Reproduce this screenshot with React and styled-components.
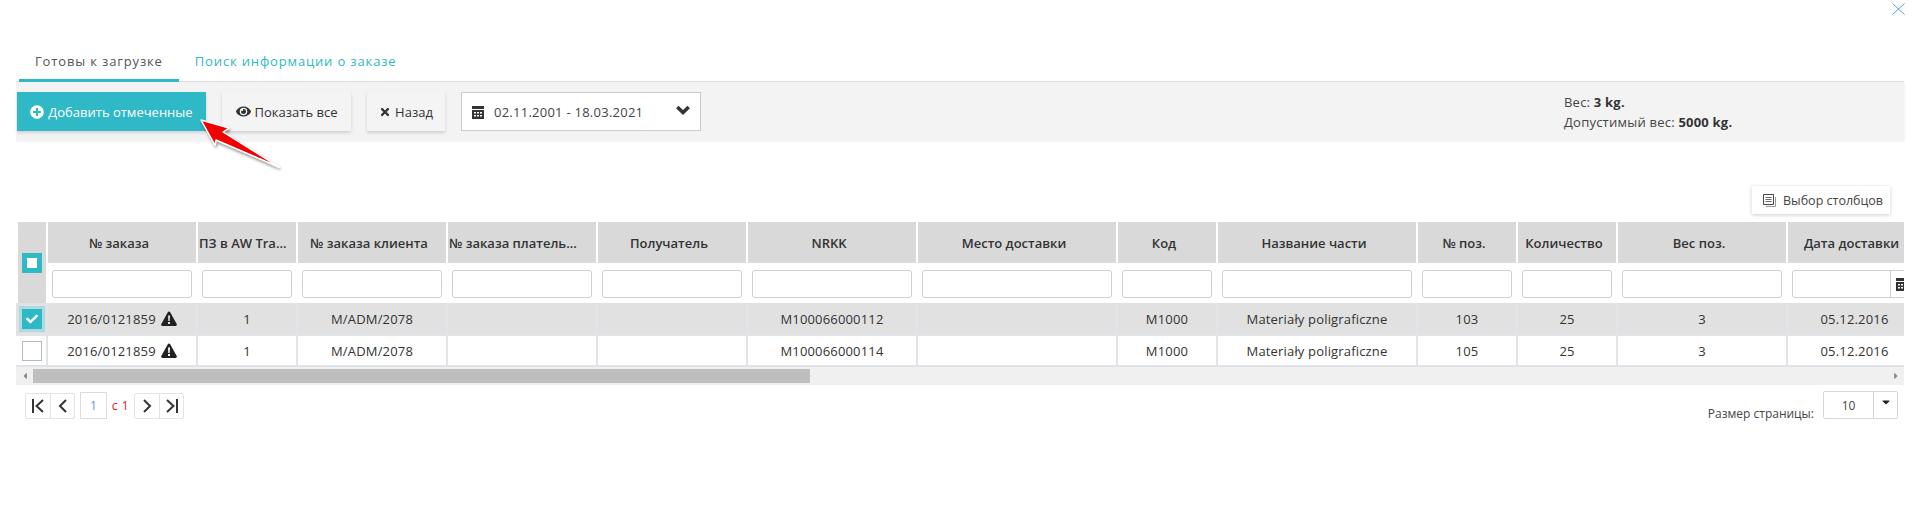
import React from 'react';
import styled, { createGlobalStyle } from 'styled-components';
import { FaPlusCircle, FaEye, FaTimes, FaCheck, FaCaretDown, FaCaretLeft, FaCaretRight } from 'react-icons/fa';

const Global = createGlobalStyle`
  html, body { margin: 0; background: #fff; }
  body { font-family: "Open Sans", "Liberation Sans", sans-serif; font-size: 13px; color: #333; }
  * { box-sizing: border-box; }
`;

const Page = styled.div`
  position: relative;
  width: 1920px;
  height: 530px;
  overflow: hidden;
  padding: 0 16px;
`;
const CloseRow = styled.div`
  display: flex;
  justify-content: flex-end;
  height: 48px;
  padding: 3px 0 0;
  margin-right: -1px;
`;
const Tabs = styled.div`
  display: flex;
  height: 34px;
  padding-left: 3px;
  border-bottom: 1px solid #ddd;
`;
const Tab = styled.div`
  height: 34px;
  padding: 0 16px 6px;
  display: flex;
  align-items: center;
  font-size: 13px;
  letter-spacing: 0.85px;
  color: ${p => (p.$active ? '#555' : '#2fb8c6')};
  border-bottom: 3px solid ${p => (p.$active ? '#2fb8c6' : 'transparent')};
`;
const Toolbar = styled.div`
  display: flex;
  align-items: flex-start;
  height: 59px;
  padding: 10px 0 0 1px;
  gap: 16px;
  background: #f3f3f3;
  box-shadow: 1px 1px 2px rgba(0,0,0,0.05);
`;
const Button = styled.div`
  width: ${p => p.$w}px;
  height: 39px;
  display: flex;
  align-items: center;
  justify-content: center;
  gap: 4px;
  font-size: 13px;
  background: ${p => (p.$primary ? '#2fb8c6' : '#f4f4f4')};
  color: ${p => (p.$primary ? '#fff' : '#333')};
  box-shadow: 0 2px 3px rgba(0,0,0,0.14);
`;
const DateBox = styled.div`
  width: 240px;
  height: 39px;
  display: flex;
  align-items: center;
  justify-content: space-between;
  padding: 0 10px 0 10px;
  background: #fff;
  border: 1px solid #ccc;
  font-size: 13px;
  letter-spacing: 0.25px;
  color: #444;
`;
const DateValue = styled.div`
  display: flex;
  align-items: center;
  gap: 10px;
`;
const ChevronSlot = styled.div`
  display: flex;
  padding-bottom: 4px;
`;
const Info = styled.div`
  margin-left: auto;
  width: 340px;
  line-height: 20px;
  font-size: 13px;
  letter-spacing: 0.22px;
  color: #444;
  b { color: #333; }
`;
const ColumnsRow = styled.div`
  display: flex;
  justify-content: flex-end;
  padding: 45px 14px 8px 0;
`;
const ColumnsButton = styled.div`
  width: 138px;
  height: 28px;
  display: flex;
  align-items: center;
  padding-left: 11px;
  gap: 7px;
  font-size: 12.5px;
  color: #444;
  background: #fff;
  box-shadow: 0 1px 4px rgba(0,0,0,0.2);
`;
const TableClip = styled.div`
  overflow: hidden;
`;
const Table = styled.table`
  table-layout: fixed;
  width: 1907px;
  border-collapse: separate;
  border-spacing: 0;
`;
const HeadCell = styled.th`
  height: 43px;
  padding: ${p => (p.$clip ? '0 0 0 1px' : '0 6px 0 0')};
  font-size: 13px;
  font-weight: 600;
  color: #333;
  text-align: ${p => (p.$clip ? 'left' : 'center')};
  background: #d9d9d9;
  background-clip: padding-box;
  border-right: 2px solid #fff;
  border-bottom: 2px solid #fff;
  white-space: nowrap;
  overflow: hidden;
`;
const SelectHead = styled.th`
  padding: 0 0 0 4px;
  background: #d9d9d9;
  background-clip: padding-box;
  border-left: 2px solid #fff;
  border-right: 2px solid #fff;
  text-align: left;
`;
const FilterCell = styled.td`
  height: 38px;
  padding: 4px;
  border-right: 2px solid #fff;
`;
const FilterInput = styled.div`
  display: flex;
  justify-content: flex-end;
  height: 28px;
  background: #fff;
  border: 1px solid #ccd0d4;
  border-radius: 3px;
`;
const DateAddon = styled.div`
  display: flex;
  align-items: center;
  width: 26px;
  padding-left: 5px;
  border-left: 1px solid #ccd0d4;
`;
const Row = styled.tr`
  background: ${p => (p.$selected ? '#e1e1e2' : '#fff')};
`;
const Cell = styled.td`
  height: ${p => (p.$selected ? 33 : 31)}px;
  padding: 0;
  font-size: 13px;
  letter-spacing: 0.17px;
  color: #333;
  text-align: center;
  white-space: nowrap;
  border-right: 2px solid #e0e4e8;
  border-bottom: 2px solid #e0e4e8;
  svg { vertical-align: -2px; margin-left: 5px; }
`;
const CheckCell = styled(Cell)`
  padding-left: 6px;
  text-align: left;
`;
const CheckBox = styled.div`
  width: 20px;
  height: 20px;
  display: flex;
  align-items: center;
  justify-content: center;
  background: ${p => (p.$on ? '#2fb8c6' : '#fff')};
  border: ${p => (p.$on ? 'none' : '1px solid #b5babf')};
  box-shadow: ${p => (p.$halo ? '0 0 0 3px #aedadf' : 'none')};
  color: #fff;
  font-size: 12px;
  svg { margin: 0; vertical-align: 0; }
`;
const HalfMark = styled.div`
  width: 10px;
  height: 10px;
  background: #fff;
`;
const ScrollTrack = styled.div`
  display: flex;
  align-items: center;
  height: 18px;
  background: #f0f0f0;
  color: #888;
  font-size: 10px;
`;
const ScrollEnd = styled.div`
  width: 17px;
  display: flex;
  justify-content: center;
`;
const ScrollThumb = styled.div`
  height: 14px;
  background: #bebebe;
`;
const ScrollSpace = styled.div`
  flex: 1;
`;
const Footer = styled.div`
  display: flex;
  justify-content: space-between;
  align-items: flex-start;
  padding: 6px 6px 0 9px;
`;
const Pager = styled.div`
  display: flex;
  align-items: center;
  margin-top: 1px;
`;
const PagerGroup = styled.div`
  display: flex;
  height: 26px;
  border: 1px solid #e3e3e3;
  border-radius: 2px;
`;
const PagerBtn = styled.div`
  width: 24px;
  display: flex;
  align-items: center;
  justify-content: center;
  color: #333;
  & + & { border-left: 1px solid #e3e3e3; }
`;
const PageBox = styled.div`
  width: 27px;
  height: 27px;
  margin-left: 5px;
  display: flex;
  align-items: center;
  justify-content: center;
  border: 1px solid #dcdcdc;
  font-size: 12px;
  color: #5a9bd5;
`;
const PageTotal = styled.div`
  width: 27px;
  text-align: center;
  font-size: 12px;
  color: #f01020;
  letter-spacing: 0.6px;
`;
const SizeBlock = styled.div`
  display: flex;
  align-items: flex-start;
  gap: 9px;
`;
const SizeLabel = styled.div`
  padding-top: 14px;
  font-size: 12px;
  color: #444;
`;
const SizeSelect = styled.div`
  display: flex;
  width: 75px;
  height: 28px;
  border: 1px solid #d4d8dc;
  border-radius: 2px;
  font-size: 12px;
  color: #444;
`;
const SizeValue = styled.div`
  width: 49px;
  display: flex;
  align-items: center;
  justify-content: center;
`;
const SizeCaret = styled.div`
  flex: 1;
  display: flex;
  justify-content: center;
  padding-top: 4px;
  font-size: 12px;
  color: #222;
  border-left: 1px solid #d4d8dc;
`;
const ArrowLayer = styled.svg`
  position: absolute;
  left: 190px;
  top: 110px;
  overflow: visible;
`;

const columns = [
  ['№ заказа', 150], ['ПЗ в AW Tra...', 100, true], ['№ заказа клиента', 150], ['№ заказа платель...', 150, true],
  ['Получатель', 150], ['NRKK', 170], ['Место доставки', 200], ['Код', 100], ['Название части', 200],
  ['№ поз.', 100], ['Количество', 100], ['Вес поз.', 170], ['Дата доставки', 135],
];
const rows = [
  { selected: true, nrkk: 'M100066000112', pos: '103' },
  { selected: false, nrkk: 'M100066000114', pos: '105' },
];

const CalendarIcon = () => (
  <svg width="12" height="14" viewBox="0 0 12 14">
    <path fill="#333" fillRule="evenodd" d="M0 1h12v3H0zM0 5h12v9H0zM2 7v1.5h2V7zM5 7v1.5h2V7zM8 7v1.5h2V7zM2 10v1.5h2V10zM5 10v1.5h2V10zM8 10v1.5h2V10z" />
  </svg>
);
const AlertIcon = () => (
  <svg width="16" height="15" viewBox="0 0 16 15">
    <path fill="#222" fillRule="evenodd" d="M8 0.5c.5 0 .9.3 1.2.8l6.5 11.6c.5.9-.1 2-1.1 2H1.4c-1 0-1.6-1.1-1.1-2L6.800 1.300C7.100.8 7.500.5 8 .5zM7 4.500l.3 5.500h1.400L9 4.500zM7 11v2h2v-2z" />
  </svg>
);
const ColumnsIcon = () => (
  <svg width="13" height="13" viewBox="0 0 13 13" fill="none">
    <path d="M12.500 3v9.500H3" stroke="#999" />
    <path d="M0.500 0.500h10v10h-10z" stroke="#444" />
    <path d="M2.500 3.500h6M2.500 5.500h6M2.500 7.500h6" stroke="#666" />
  </svg>
);
const FirstIcon = () => (
  <svg width="14" height="16" viewBox="0 0 14 16" fill="none" stroke="#333" strokeWidth="2">
    <path d="M2 1v14M12 2L5.500 8l6.500 6" />
  </svg>
);
const PrevIcon = () => (
  <svg width="10" height="16" viewBox="0 0 10 16" fill="none" stroke="#333" strokeWidth="2">
    <path d="M8 2L2 8l6 6" />
  </svg>
);
const NextIcon = () => (
  <svg width="10" height="16" viewBox="0 0 10 16" fill="none" stroke="#333" strokeWidth="2">
    <path d="M2 2l6 6-6 6" />
  </svg>
);
const LastIcon = () => (
  <svg width="14" height="16" viewBox="0 0 14 16" fill="none" stroke="#333" strokeWidth="2">
    <path d="M12 1v14M2 2l6.500 6L2 14" />
  </svg>
);
const CloseIcon = () => (
  <svg width="13" height="12" viewBox="0 0 13 12" fill="none" stroke="#4a9fe0" strokeWidth="1">
    <path d="M0.500 0.500l12 11M12.500 0.500l-12 11" />
  </svg>
);
const ChevronIcon = () => (
  <svg width="14" height="10" viewBox="0 0 14 10" fill="none" stroke="#333" strokeWidth="3.600">
    <path d="M1.300 2l5.700 5.500L12.700 2" />
  </svg>
);

export default function App() {
  return (
    <Page>
      <Global />
      <CloseRow><CloseIcon /></CloseRow>
      <Tabs>
        <Tab $active>Готовы к загрузке</Tab>
        <Tab>Поиск информации о заказе</Tab>
      </Tabs>
      <Toolbar>
        <Button $primary $w={189}><FaPlusCircle size={14} />Добавить отмеченные</Button>
        <Button $w={129}><FaEye size={15} />Показать все</Button>
        <Button $w={78}><FaTimes size={12} />Назад</Button>
        <DateBox>
          <DateValue><CalendarIcon />02.11.2001 - 18.03.2021</DateValue>
          <ChevronSlot><ChevronIcon /></ChevronSlot>
        </DateBox>
        <Info>
          <div>Вес: <b>3 kg.</b></div>
          <div>Допустимый вес: <b>5000 kg.</b></div>
        </Info>
      </Toolbar>
      <ColumnsRow>
        <ColumnsButton><ColumnsIcon />Выбор столбцов</ColumnsButton>
      </ColumnsRow>
      <TableClip>
        <Table>
          <colgroup>
            <col width="32" />
            {columns.map(([t, w]) => <col key={t} width={w} />)}
          </colgroup>
          <thead>
            <tr>
              <SelectHead rowSpan={2}>
                <CheckBox $on><HalfMark /></CheckBox>
              </SelectHead>
              {columns.map(([t, , clip]) => <HeadCell key={t} $clip={clip}>{t}</HeadCell>)}
            </tr>
            <tr>
              {columns.map(([t], i) => (
                <FilterCell key={t}>
                  <FilterInput>{i === columns.length - 1 && <DateAddon><CalendarIcon /></DateAddon>}</FilterInput>
                </FilterCell>
              ))}
            </tr>
          </thead>
          <tbody>
            {rows.map(r => (
              <Row key={r.nrkk} $selected={r.selected}>
                <CheckCell $selected={r.selected}>
                  <CheckBox $on={r.selected} $halo={r.selected}>{r.selected && <FaCheck />}</CheckBox>
                </CheckCell>
                <Cell $selected={r.selected}>2016/0121859<AlertIcon /></Cell>
                <Cell>1</Cell>
                <Cell>M/ADM/2078</Cell>
                <Cell />
                <Cell />
                <Cell>{r.nrkk}</Cell>
                <Cell />
                <Cell>M1000</Cell>
                <Cell>Materiały poligraficzne</Cell>
                <Cell>{r.pos}</Cell>
                <Cell>25</Cell>
                <Cell>3</Cell>
                <Cell>05.12.2016</Cell>
              </Row>
            ))}
          </tbody>
        </Table>
      </TableClip>
      <ScrollTrack>
        <ScrollEnd><FaCaretLeft /></ScrollEnd>
        <ScrollThumb style={{ width: 777 }} />
        <ScrollSpace />
        <ScrollEnd><FaCaretRight /></ScrollEnd>
      </ScrollTrack>
      <Footer>
        <Pager>
          <PagerGroup>
            <PagerBtn><FirstIcon /></PagerBtn>
            <PagerBtn><PrevIcon /></PagerBtn>
          </PagerGroup>
          <PageBox>1</PageBox>
          <PageTotal>с 1</PageTotal>
          <PagerGroup>
            <PagerBtn><NextIcon /></PagerBtn>
            <PagerBtn><LastIcon /></PagerBtn>
          </PagerGroup>
        </Pager>
        <SizeBlock>
          <SizeLabel>Размер страницы:</SizeLabel>
          <SizeSelect>
            <SizeValue>10</SizeValue>
            <SizeCaret><FaCaretDown /></SizeCaret>
          </SizeSelect>
        </SizeBlock>
      </Footer>
      <ArrowLayer width="90" height="65" viewBox="0 0 90 65">
        <defs>
          <filter id="arrowShadow" x="-20%" y="-20%" width="140%" height="140%">
            <feDropShadow dx="1" dy="2" stdDeviation="1.5" floodColor="#000" floodOpacity="0.45" />
          </filter>
        </defs>
        <path d="M11 10 L39 18 L33 22 L89 57 L26 30 L25 35 Z" fill="#f00000" stroke="#fff" strokeWidth="1.4" strokeLinejoin="round" filter="url(#arrowShadow)" />
      </ArrowLayer>
    </Page>
  );
}
